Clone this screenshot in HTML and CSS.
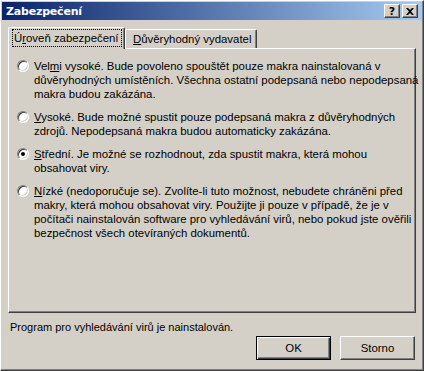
FILE: index.html
```html
<!DOCTYPE html>
<html lang="cs">
<head>
<meta charset="utf-8">
<title>Zabezpečení</title>
<link rel="stylesheet" href="styles.css">
</head>
<body>
<div class="window">
  <div class="titlebar">
    <span class="title">Zabezpečení</span>
    <div class="caption-buttons">
      <span class="cbtn help">?</span>
      <span class="cbtn close">
        <svg width="8" height="7" viewBox="0 0 8 7"><path d="M0 0h2l2 2 2-2h2L5 3.5 8 7H6L4 5 2 7H0l3-3.5z" fill="#000"/></svg>
      </span>
    </div>
  </div>
  <div class="content">
    <div class="tabstrip">
      <div class="tab selected"><span class="focus">Ú<u>r</u>oveň zabezpečení</span></div>
      <div class="tab"><span><u>D</u>ůvěryhodný vydavatel</span></div>
    </div>
    <div class="pane">
      <div class="option">
        <span class="radio"></span>
        <p class="label">Vel<u>m</u>i vysoké. Bude povoleno spouštět pouze makra nainstalovaná v<br>důvěryhodných umístěních. Všechna ostatní podepsaná nebo nepodepsaná<br>makra budou zakázána.</p>
      </div>
      <div class="option">
        <span class="radio"></span>
        <p class="label"><u>V</u>ysoké. Bude možné spustit pouze podepsaná makra z důvěryhodných<br>zdrojů. Nepodepsaná makra budou automaticky zakázána.</p>
      </div>
      <div class="option">
        <span class="radio checked"></span>
        <p class="label"><u>S</u>třední. Je možné se rozhodnout, zda spustit makra, která mohou<br>obsahovat viry.</p>
      </div>
      <div class="option">
        <span class="radio"></span>
        <p class="label"><u>N</u>ízké (nedoporučuje se). Zvolíte-li tuto možnost, nebudete chráněni před<br>makry, která mohou obsahovat viry. Použijte ji pouze v případě, že je v<br>počítači nainstalován software pro vyhledávání virů, nebo pokud jste ověřili<br>bezpečnost všech otevíraných dokumentů.</p>
      </div>
    </div>
    <p class="status">Program pro vyhledávání virů je nainstalován.</p>
    <div class="buttons">
      <button class="btn default">OK</button>
      <button class="btn">Storno</button>
    </div>
  </div>
</div>
</body>
</html>
```
FILE: styles.css
```css
html, body {
  margin: 0;
  padding: 0;
  background: #D4D0C8;
}
body {
  font-family: "Liberation Sans", Arial, sans-serif;
  font-size: 11.4px;
  color: #000;
}
.window {
  box-sizing: border-box;
  width: 424px;
  height: 371px;
  background: #D4D0C8;
  border: 1px solid;
  border-color: #fff #404040 #404040 #fff;
  box-shadow: inset -1px -1px 0 #808080;
  padding: 1px;
  display: flex;
  flex-direction: column;
}
.titlebar {
  height: 18px;
  background: linear-gradient(to right, #0A246A, #A6CAF0);
  display: flex;
  align-items: center;
  justify-content: space-between;
  padding: 0 4px 0 4px;
}
.title {
  color: #fff;
  font-family: "DejaVu Sans", Verdana, sans-serif;
  font-weight: bold;
  font-size: 11px;
  letter-spacing: -0.2px;
}
.caption-buttons {
  display: flex;
  gap: 1px;
}
.cbtn {
  box-sizing: border-box;
  width: 16px;
  height: 14px;
  background: #D4D0C8;
  border: 1px solid;
  border-color: #fff #404040 #404040 #fff;
  box-shadow: inset -1px -1px 0 #808080;
  display: flex;
  align-items: center;
  justify-content: center;
  font-family: "DejaVu Sans", sans-serif;
  font-weight: bold;
  font-size: 11px;
  line-height: 1;
}
.cbtn.close {
  margin-left: 1px;
}
.content {
  flex: 1;
  display: flex;
  flex-direction: column;
  padding: 8px 6px 0 6px;
}
.tabstrip {
  display: flex;
  align-items: flex-end;
  height: 21px;
  position: relative;
  z-index: 1;
  margin-bottom: -1px;
}
.tab {
  box-sizing: border-box;
  height: 19px;
  border: 1px solid;
  border-color: #fff #404040 transparent #fff;
  border-bottom: 0;
  border-radius: 2px 2px 0 0;
  box-shadow: inset -1px 0 0 #808080;
  background: #D4D0C8;
  padding: 2px 9px 0 6px;
  white-space: nowrap;
  line-height: 14px;
}
.tab.selected {
  height: 22px;
  width: 117px;
  padding: 2px 3px 0 4px;
}
.tab:not(.selected) {
  margin-bottom: 1px;
  width: 132px;
  padding-left: 7px;
}
.focus {
  display: inline-block;
  outline: 1px dotted #000;
  padding: 1px 2px 1px 1px;
}
.pane {
  box-sizing: border-box;
  height: 265px;
  width: 408px;
  border: 1px solid;
  border-color: #fff #404040 #404040 #fff;
  box-shadow: inset -1px -1px 0 #808080;
  padding: 10px 8px 0 8px;
  display: flex;
  flex-direction: column;
  gap: 9px;
}
.option {
  display: flex;
  align-items: flex-start;
  gap: 5px;
}
.radio {
  box-sizing: border-box;
  flex: none;
  width: 12px;
  height: 12px;
  margin-top: 1px;
  border-radius: 50%;
  background: #fff;
  border: 1px solid;
  border-color: #808080 #fff #fff #808080;
  box-shadow: inset 1px 1px 0 #404040, inset -1px -1px 0 #D4D0C8;
  display: flex;
  align-items: center;
  justify-content: center;
}
.radio.checked::after {
  content: "";
  width: 4px;
  height: 4px;
  border-radius: 50%;
  background: #000;
}
.label {
  margin: 0;
  line-height: 14px;
  white-space: nowrap;
}
.status {
  margin: 7px 0 0 2px;
  font-size: 11px;
  line-height: 14px;
}
.buttons {
  display: flex;
  justify-content: flex-end;
  gap: 9px;
  margin-top: 2px;
  padding-right: 1px;
}
.btn {
  box-sizing: border-box;
  width: 75px;
  height: 24px;
  font-family: "Liberation Sans", Arial, sans-serif;
  font-size: 11.4px;
  color: #000;
  background: #D4D0C8;
  border: 1px solid;
  border-color: #fff #404040 #404040 #fff;
  box-shadow: inset -1px -1px 0 #808080;
  padding: 0;
  margin: 0;
}
.btn.default {
  border: 1px solid #000;
  box-shadow: inset 1px 1px 0 #fff, inset -1px -1px 0 #404040, inset -2px -2px 0 #808080;
}
```
